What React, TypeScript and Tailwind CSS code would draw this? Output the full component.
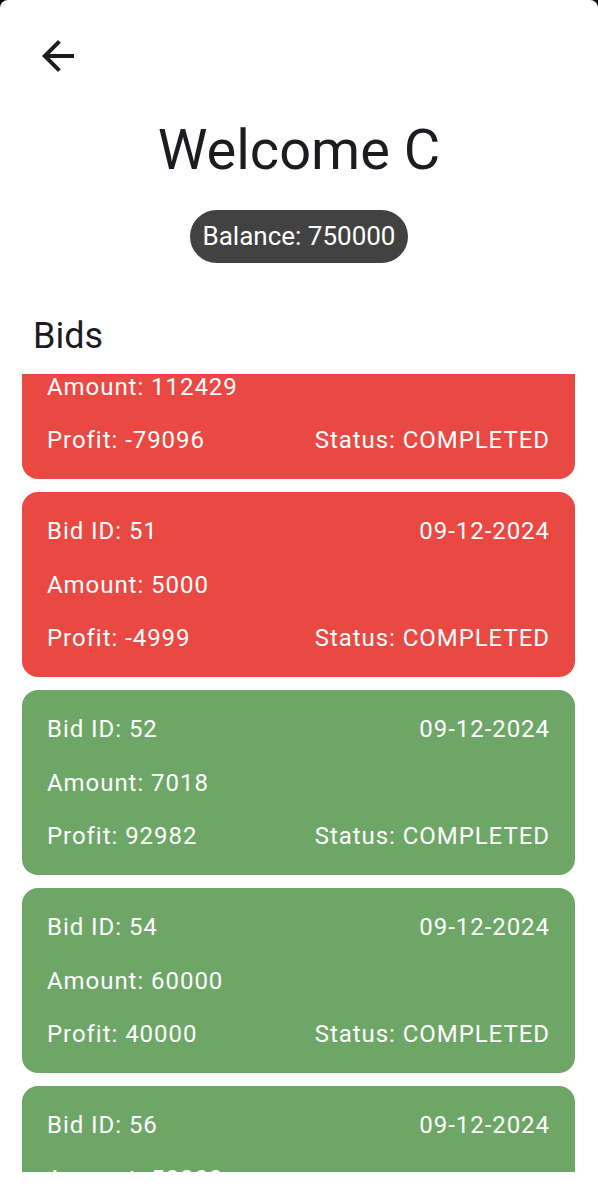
import React from "react";

type Bid = {
  id: number;
  date: string;
  amount: number;
  profit: number;
  status: string;
};

const bids: Bid[] = [
  { id: 50, date: "09-12-2024", amount: 112429, profit: -79096, status: "COMPLETED" },
  { id: 51, date: "09-12-2024", amount: 5000, profit: -4999, status: "COMPLETED" },
  { id: 52, date: "09-12-2024", amount: 7018, profit: 92982, status: "COMPLETED" },
  { id: 54, date: "09-12-2024", amount: 60000, profit: 40000, status: "COMPLETED" },
  { id: 56, date: "09-12-2024", amount: 50000, profit: 50000, status: "COMPLETED" },
];

const BidCard = ({ bid }: { bid: Bid }) => {
  const bg = bid.profit < 0 ? "bg-[#ea4943]" : "bg-[#6da667]";
  return (
    <div
      className={`${bg} rounded-[16px] px-[25px] py-[24px] flex flex-col gap-[23.5px] text-white text-[24px] leading-[30px] tracking-[0.95px] shrink-0`}
    >
      <div className="flex justify-between">
        <span>Bid ID: {bid.id}</span>
        <span>{bid.date}</span>
      </div>
      <div>Amount: {bid.amount}</div>
      <div className="flex justify-between">
        <span>Profit: {bid.profit}</span>
        <span>Status: {bid.status}</span>
      </div>
    </div>
  );
};

export default function App() {
  return (
    <div className="h-[1196px] bg-black" style={{ fontFamily: "Roboto, 'Noto Sans', sans-serif" }}>
      <div className="h-full bg-white rounded-t-[8px] flex flex-col overflow-hidden text-[#1c1b1f]">
        {/* back arrow */}
        <div className="pt-[32px] pl-[34px]">
          <svg width="48" height="48" viewBox="0 0 24 24" fill="#1c1b1f">
            <path d="M20 11H7.83l5.59-5.59L12 4l-8 8 8 8 1.41-1.41L7.83 13H20v-2z" />
          </svg>
        </div>

        <h1 className="mt-[38px] text-center text-[56px] leading-[64px]">Welcome C</h1>

        <div className="mt-[28px] flex justify-center">
          <div className="h-[53px] px-[13px] rounded-full bg-[#424242] text-white text-[26px] flex items-center">
            Balance: 750000
          </div>
        </div>

        <h2 className="mt-[53px] pl-[33px] text-[36px] leading-[40px]">Bids</h2>

        {/* scrolled list */}
        <div className="mt-[18px] h-[798px] overflow-hidden pl-[22px] pr-[23px]">
          <div className="-mt-[80px] flex flex-col gap-[13px]">
            {bids.map((b) => (
              <BidCard key={b.id} bid={b} />
            ))}
          </div>
        </div>
      </div>
    </div>
  );
}
